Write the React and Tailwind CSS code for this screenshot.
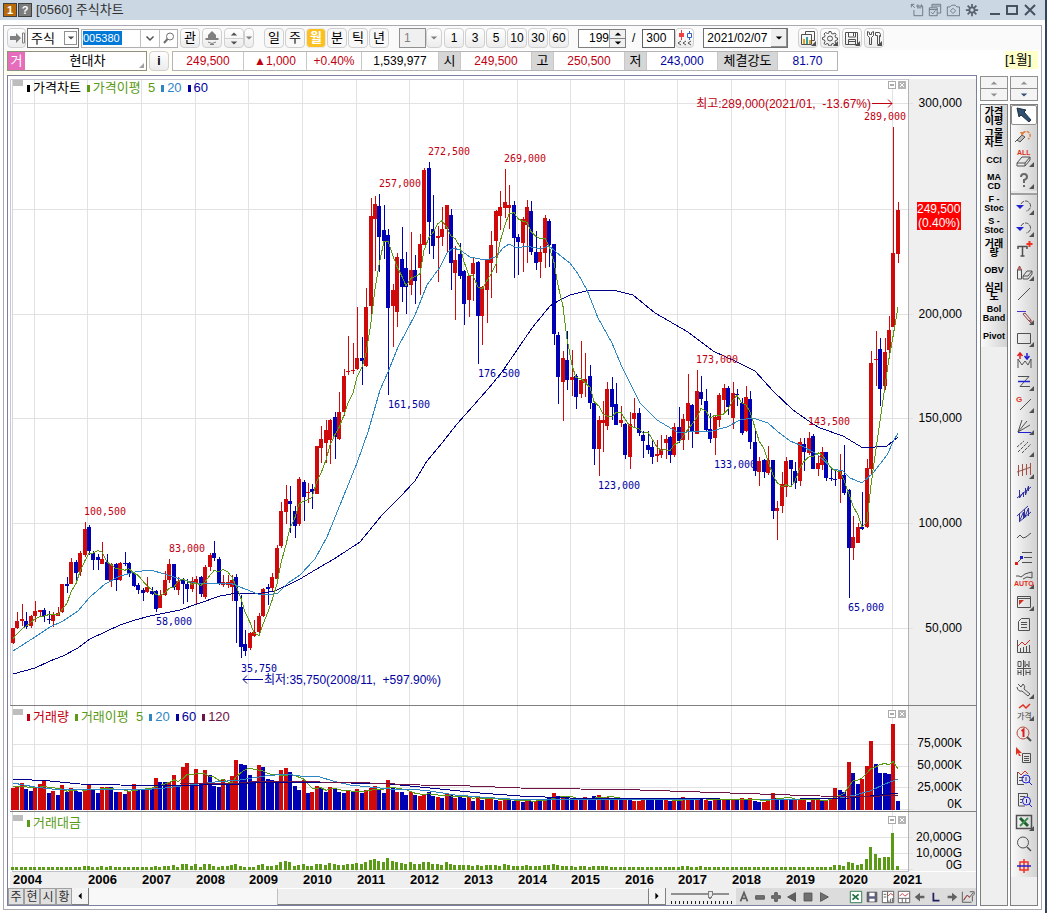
import React, { useState } from "react";

const RED = "#d00a0a";
const BLUE = "#0000b4";
const GREEN = "#5a9a14";
const SKY = "#2f86c4";
const NAVY = "#00008b";
const WINE = "#6e1446";

// -----------------------------
// CHART DATA
// -----------------------------
// one row per month: [up, body top, body bottom, high, low]
const CANDLES = [
  [1, 628, 643, 628, 644], [1, 621, 628, 612, 629], [1, 619, 621, 604, 626], [0, 621, 627, 612, 629], [1, 616, 626, 615, 628],
  [1, 611, 616, 601, 622], [1, 610, 612, 610, 617], [0, 610, 616, 608, 622], [0, 619, 620, 611, 624], [1, 614, 621, 612, 627],
  [1, 613, 616, 607, 616], [1, 584, 612, 584, 613], [0, 584, 586, 577, 593], [1, 562, 584, 558, 584], [0, 562, 573, 560, 583],
  [1, 553, 572, 551, 576], [1, 529, 555, 522, 557], [0, 527, 551, 525, 555], [0, 553, 560, 551, 570], [0, 557, 560, 554, 570],
  [1, 559, 564, 542, 564], [0, 562, 580, 554, 580], [1, 564, 581, 563, 587], [0, 564, 580, 563, 591], [1, 563, 580, 562, 581],
  [0, 563, 564, 552, 566], [0, 563, 573, 562, 577], [0, 573, 586, 572, 587], [0, 585, 590, 583, 594], [0, 590, 593, 588, 601],
  [1, 587, 592, 577, 593], [0, 591, 594, 587, 595], [0, 591, 609, 590, 612], [1, 595, 608, 590, 608], [1, 580, 595, 571, 596],
  [1, 564, 580, 559, 583], [0, 564, 587, 564, 590], [1, 581, 590, 577, 595], [0, 579, 584, 578, 604], [0, 584, 589, 579, 602],
  [1, 581, 589, 577, 592], [1, 579, 583, 576, 604], [0, 577, 594, 576, 597], [1, 567, 597, 565, 599], [1, 555, 567, 553, 571],
  [0, 553, 558, 541, 561], [0, 559, 584, 557, 585], [1, 582, 585, 575, 587], [1, 582, 585, 575, 588], [1, 580, 587, 575, 601],
  [0, 577, 601, 574, 643], [0, 607, 647, 595, 658], [0, 644, 651, 630, 656], [1, 633, 648, 632, 650], [1, 632, 636, 620, 637],
  [1, 616, 632, 613, 636], [1, 589, 616, 588, 617], [0, 587, 589, 584, 605], [1, 577, 588, 573, 591], [1, 548, 579, 545, 580],
  [1, 511, 546, 502, 548], [1, 499, 512, 485, 524], [0, 501, 504, 486, 533], [0, 511, 526, 506, 538], [1, 479, 524, 477, 526],
  [0, 482, 497, 480, 521], [1, 492, 493, 483, 503], [0, 489, 492, 484, 509], [1, 446, 494, 446, 494], [1, 439, 448, 426, 463],
  [1, 430, 443, 420, 463], [1, 420, 440, 419, 464], [0, 417, 437, 412, 459], [1, 412, 439, 392, 440], [1, 376, 412, 369, 416],
  [1, 371, 372, 336, 375], [1, 370, 371, 343, 374], [1, 358, 369, 307, 370], [0, 358, 361, 337, 385], [1, 307, 366, 288, 367],
  [1, 216, 306, 198, 319], [1, 204, 219, 196, 271], [0, 206, 237, 194, 272], [0, 230, 241, 205, 259], [0, 235, 308, 229, 395],
  [1, 290, 306, 284, 347], [1, 257, 312, 253, 327], [0, 259, 287, 227, 302], [0, 268, 287, 252, 314], [1, 270, 285, 232, 295],
  [0, 270, 281, 255, 304], [1, 244, 268, 234, 295], [1, 170, 245, 168, 245], [0, 168, 222, 162, 254], [0, 229, 246, 195, 259],
  [1, 236, 238, 226, 282], [1, 229, 237, 207, 246], [1, 205, 229, 205, 253], [0, 215, 263, 209, 290], [1, 260, 273, 246, 320],
  [0, 254, 276, 243, 279], [0, 271, 304, 270, 325], [1, 276, 300, 275, 317], [1, 263, 274, 258, 301], [0, 262, 316, 261, 364],
  [1, 287, 316, 286, 345], [1, 260, 290, 259, 323], [1, 245, 263, 231, 298], [1, 211, 241, 210, 273], [1, 207, 216, 191, 230],
  [1, 202, 208, 169, 218], [1, 205, 208, 185, 229], [0, 205, 238, 201, 278], [0, 237, 242, 234, 275], [1, 219, 243, 217, 272],
  [1, 207, 225, 200, 263], [0, 211, 252, 201, 255], [0, 252, 263, 231, 270], [1, 252, 262, 246, 278], [1, 218, 253, 215, 268],
  [0, 221, 245, 219, 267], [0, 244, 334, 244, 345], [0, 335, 377, 332, 404], [1, 358, 382, 351, 421], [0, 360, 380, 331, 390],
  [1, 377, 380, 350, 396], [0, 376, 397, 374, 409], [1, 380, 394, 341, 398], [1, 379, 383, 353, 397], [0, 376, 403, 365, 409],
  [0, 403, 449, 402, 465], [1, 420, 449, 416, 476], [1, 420, 423, 401, 452], [1, 389, 426, 382, 430], [0, 389, 407, 377, 420],
  [0, 404, 425, 383, 425], [1, 420, 423, 406, 427], [0, 424, 455, 423, 459], [1, 424, 457, 412, 469], [1, 413, 419, 398, 428],
  [0, 413, 433, 408, 436], [0, 435, 441, 431, 458], [0, 445, 450, 431, 454], [0, 447, 457, 440, 464], [1, 454, 456, 440, 462],
  [1, 449, 455, 435, 458], [1, 439, 443, 435, 459], [0, 437, 455, 436, 463], [1, 427, 455, 423, 457], [0, 427, 441, 407, 443],
  [1, 419, 440, 414, 450], [1, 403, 421, 374, 440], [0, 405, 431, 404, 448], [1, 391, 434, 370, 434], [0, 392, 399, 376, 405],
  [0, 401, 430, 389, 431], [0, 429, 439, 413, 443], [1, 417, 438, 416, 455], [1, 395, 420, 393, 427], [1, 388, 400, 384, 413],
  [0, 388, 407, 386, 415], [1, 393, 418, 382, 429], [0, 394, 395, 389, 406], [0, 403, 433, 398, 435], [1, 397, 431, 386, 432],
  [0, 399, 442, 391, 449], [0, 442, 471, 431, 476], [1, 461, 472, 457, 486], [0, 460, 472, 459, 478], [1, 460, 473, 446, 475],
  [0, 460, 511, 460, 519], [1, 508, 511, 501, 540], [1, 484, 506, 472, 513], [1, 461, 487, 457, 497], [0, 460, 469, 460, 485],
  [0, 471, 483, 462, 489], [1, 442, 481, 438, 486], [0, 444, 452, 438, 471], [1, 438, 453, 432, 455], [0, 436, 469, 434, 469],
  [1, 463, 469, 455, 476], [1, 452, 465, 447, 470], [0, 452, 478, 452, 481], [0, 478, 479, 468, 481], [0, 479, 480, 471, 486],
  [1, 471, 479, 454, 503], [0, 475, 493, 445, 495], [0, 490, 548, 489, 598], [1, 537, 548, 516, 560], [1, 527, 543, 523, 543],
  [0, 527, 529, 492, 530], [1, 468, 527, 459, 528], [1, 363, 469, 351, 474], [1, 359, 360, 331, 386], [0, 349, 389, 338, 406],
  [1, 352, 386, 338, 390], [1, 330, 350, 316, 355], [1, 253, 327, 127, 327], [1, 210, 254, 202, 263],
];

// bar heights; a negative one is a month with less volume than the one before
const VOLUME = [
  22, 23, 27, -21, -19, 22, 26, 29, -17, 19, -15, 25, -18, 22, -19, -18, 20, 26, -21, -17,
  23, 23, -23, -18, 18, -16, 19, 26, -21, -21, 20, -22, 32, -28, -28, 28, 35, -24, 43, 47,
  -26, 41, -26, 40, -35, -24, -23, 31, -26, 34, 50, -46, -45, -35, -28, 45, -43, -31, -30, -28,
  40, 42, -38, -24, -20, 30, -17, 18, 24, -22, -18, 23, -21, -18, -17, 19, -18, 21, -17, 20,
  22, 24, -21, -17, 30, -22, 18, -18, -15, 18, -15, 14, 16, -18, -14, 13, -12, 16, -15, 12,
  -13, -12, 13, -9, 14, -10, 11, 12, -10, 9, 12, -10, -9, 9, -8, 10, -9, 9, -10, 11,
  -12, 17, -14, 12, -12, -12, 10, -12, 13, -10, -14, 15, -13, 13, -11, 12, -10, 11, -12, 9,
  9, 12, -11, -11, -11, -10, 10, -9, 9, -9, 13, 12, -11, 10, -12, 10, -9, 11, -11, 10,
  -11, 10, -10, 12, -10, 12, -9, -8, 8, 11, 17, -12, -11, 10, -11, 11, 11, 11, -8, 10,
  11, -9, 10, 12, 22, -20, -18, 48, -37, -26, 31, 44, 69, -46, -37, -37, -36, 86, -9,
];

const MA20 = "13,651 35,637 50,627 63,621 78,611 90,597 105,584 120,576 135,572 150,570 165,574 180,579 195,583 210,584 230,583 245,589 258,594 268,595 278,593 288,583 300,575 315,559 327,537 342,500 357,463 368,432 380,390 388,372 398,347 415,315 427,285 440,267 447,253 453,248 460,250 470,257 480,259 490,259 497,256 503,248 509,244 517,248 527,246 540,249 549,246 562,257 570,263 578,274 587,290 598,318 612,343 622,367 640,403 657,420 677,432 687,432 712,431 727,427 740,420 753,418 768,423 777,431 790,441 800,445 817,454 833,469 843,471 850,478 862,483 873,473 887,455 893,442 898,433";
const MA60 = "13,674 35,668 50,661 63,656 78,648 90,639 105,632 120,625 135,620 150,616 165,613 180,610 200,603 220,596 237,593 262,593 275,591 290,584 300,579 315,570 334,559 360,542 382,515 400,497 415,481 427,461 442,443 457,424 473,406 488,389 502,372 517,350 532,328 550,306 560,300 570,295 590,290 613,290 633,295 655,313 688,332 713,351 737,362 755,371 773,391 793,410 813,424 820,428 843,436 863,448 887,446 898,437";

const VMA20 = "13,783 35,787 60,790 90,789 140,790 165,788 190,785 215,782 240,780 265,776 285,774 300,776 320,777 333,781 350,785 370,787 390,789 410,789 430,791 455,795 480,797 510,799 560,799 600,799 640,799 700,800 760,800 800,799 840,798 855,795 870,791 885,784 898,779";
const VMA60 = "13,779 50,781 80,784 120,785 160,786 200,785 240,784 270,782 320,782 350,783 390,784 420,787 450,790 480,793 520,796 570,798 640,798 720,799 800,799 850,798 880,795 898,793";
const VMA120 = "180,784 240,783 260,781 320,782 370,783 420,785 470,786 520,788 580,789 640,790 700,792 760,794 820,796 855,797 880,796 898,795";

const YEARS = Array.from({ length: 17 }, (_, k) => 2005 + k);
const STEP = 4.4695;
const xAt = (i) => Math.round(13 + i * STEP);
const yearX = (k) => Math.round(11.5 + (5 + 12 * k) * STEP) + 0.5;

const closeY = (c) => (c[0] ? c[1] : c[2]);

const average = (values, before, size) => {
  const all = [...before, ...values];
  return values
    .map((_, i) => {
      const part = all.slice(i, i + size);
      return xAt(i) + "," + (part.reduce((a, b) => a + b, 0) / size).toFixed(1);
    })
    .join(" ");
};

const MA5 = average(CANDLES.map(closeY), [645, 644, 640, 636], 5);
const VMA5 = average(VOLUME.map((v) => 810 - Math.abs(v)), [785, 786, 787, 787], 5);

const PEAKS = [
  [84, 515, "100,500", 1], [169, 552, "83,000", 1], [379, 187, "257,000", 1], [428, 155, "272,500", 1],
  [504, 162, "269,000", 1], [696, 363, "173,000", 1], [808, 425, "143,500", 1], [864, 120, "289,000", 1],
  [156, 625, "58,000", 0], [241, 672, "35,750", 0], [388, 408, "161,500", 0], [478, 377, "176,500", 0],
  [598, 489, "123,000", 0], [714, 468, "133,000", 0], [848, 611, "65,000", 0],
];

// -----------------------------
// CHART PANES
// -----------------------------
const AXIS = "font-['Liberation_Sans','Noto_Sans_CJK_KR',sans-serif] text-[12px]";

function Grid({ top, bottom, rows }) {
  return (
    <g shapeRendering="crispEdges">
      <rect x="909" y={top} width="67" height={bottom - top} fill="#efefef" />
      {YEARS.map((year, k) => (
        <line key={year} x1={yearX(k)} x2={yearX(k)} y1={top} y2={bottom} stroke="#e2e2e6" />
      ))}
      {rows.map((y) => (
        <line key={y} x1="12" x2="913" y1={y + 0.5} y2={y + 0.5} stroke="#e2e2e2" />
      ))}
      <line x1="12.5" x2="12.5" y1={top} y2={bottom} stroke="#d4d4dc" />
      <line x1="908.5" x2="908.5" y1={top} y2={bottom} stroke="#b4b4b4" />
    </g>
  );
}

function PaneHead({ items }) {
  return (
    <>
      <div className="absolute left-[5px] top-1 flex items-start">
        <span className="h-[6px] w-[10px] bg-[#bdbdbd]" />
        <div className="ml-1 flex gap-[6px] text-[13px] leading-[16px]">
          {items.map(([label, tone, mark]) => (
            <span key={label} className={"flex items-center gap-[3px] whitespace-pre " + tone}>
              <i className={"h-[7px] w-[3px] " + mark} />
              {label}
            </span>
          ))}
        </div>
      </div>
      <div className="absolute right-[70px] top-[5px] flex gap-[2px]">
        <button aria-label="최대화" className="flex h-[8px] w-[8px] items-center justify-center border border-[#aaa] bg-white">
          <i className="h-[2px] w-[4px] bg-[#aaa]" />
        </button>
        <button aria-label="닫기" className="h-[8px] w-[8px] bg-[#b4b4b4]">
          <svg viewBox="0 0 8 8" className="block h-full w-full" stroke="#fff">
            <path d="M2 2l4 4M6 2l-4 4" />
          </svg>
        </button>
      </div>
    </>
  );
}

function PricePane() {
  return (
    <section className="relative">
      <svg viewBox="8 76 968 629" className="block h-auto w-full">
        <rect x="8" y="76" width="968" height="629" fill="#fff" />
        <Grid top={79} bottom={705} rows={[103, 209, 314, 418, 523, 628]} />
        <path d="M10.5 705V79.5H908" fill="none" stroke="#c8c8d4" />
        <g shapeRendering="crispEdges">
          {CANDLES.map(([up, top, bottom, high, low], i) => (
            <g key={i} fill={up ? RED : BLUE}>
              <rect x={xAt(i)} y={high} width="1" height={low - high} />
              <rect x={xAt(i) - 2} y={top} width="4" height={Math.max(1, bottom - top)} />
            </g>
          ))}
        </g>
        <g fill="none" strokeWidth="1" shapeRendering="crispEdges">
          <polyline points={MA60} stroke={NAVY} />
          <polyline points={MA20} stroke={SKY} />
          <polyline points={MA5} stroke={GREEN} />
        </g>
        <g className="font-['DejaVu_Sans_Mono',monospace] text-[10px]">
          {PEAKS.map(([x, y, label, up]) => (
            <text key={label} x={x} y={y} fill={up ? "#c00010" : "#0000a0"}>
              {label}
            </text>
          ))}
        </g>
        <g className={AXIS}>
          <text x="871" y="108" textAnchor="end" fill="#c00010">최고:289,000(2021/01,&nbsp; -13.67%)</text>
          <text x="264" y="684" fill="#0000a0">최저:35,750(2008/11,&nbsp; +597.90%)</text>
          <path d="M872 103.5h20m-4 -4l4 4l-4 4" fill="none" stroke="#c00010" />
          <path d="M263 679.5h-20m4 -4l-4 4l4 4" fill="none" stroke="#0000a0" />
          {[["300,000", 107], ["200,000", 318], ["150,000", 422], ["100,000", 527], ["50,000", 632]].map(([label, y]) => (
            <text key={label} x="962" y={y} textAnchor="end">{label}</text>
          ))}
          <rect x="917" y="202" width="44" height="28" fill="#f00" />
          <text x="917" y="213" fill="#fff">249,500</text>
          <text x="918" y="227" fill="#fff">(0.40%)</text>
        </g>
      </svg>
      <PaneHead
        items={[
          ["가격차트", "text-black", "bg-black"],
          ["가격이평  5", "text-[#5a9a14]", "bg-[#5a9a14]"],
          ["20", "text-[#2f86c4]", "bg-[#2f86c4]"],
          ["60", "text-[#0000a0]", "bg-[#0000a0]"],
        ]}
      />
    </section>
  );
}

function VolumePane() {
  return (
    <section className="relative">
      <svg viewBox="8 705 968 106" className="block h-auto w-full">
        <rect x="8" y="705" width="968" height="106" fill="#fff" />
        <Grid top={705} bottom={811} rows={[744, 766, 787, 809]} />
        <path d="M10 705.5H976" stroke="#808080" />
        <g shapeRendering="crispEdges">
          {VOLUME.map((v, i) => (
            <rect key={i} x={xAt(i) - 2} y={810 - Math.abs(v)} width="4" height={Math.abs(v)} fill={v > 0 ? RED : BLUE} />
          ))}
        </g>
        <g fill="none" shapeRendering="crispEdges">
          <polyline points={VMA5} stroke={GREEN} />
          <polyline points={VMA20} stroke={SKY} />
          <polyline points={VMA60} stroke={NAVY} />
          <polyline points={VMA120} stroke={WINE} />
        </g>
        <g className={AXIS} textAnchor="end">
          <text x="962" y="747">75,000K</text>
          <text x="962" y="769">50,000K</text>
          <text x="962" y="791">25,000K</text>
          <text x="962" y="808">0K</text>
        </g>
      </svg>
      <PaneHead
        items={[
          ["거래량", "text-[#c00010]", "bg-[#c00010]"],
          ["거래이평  5", "text-[#5a9a14]", "bg-[#5a9a14]"],
          ["20", "text-[#2f86c4]", "bg-[#2f86c4]"],
          ["60", "text-[#0000a0]", "bg-[#0000a0]"],
          ["120", "text-[#6e1446]", "bg-[#6e1446]"],
        ]}
      />
    </section>
  );
}

function ValuePane() {
  // traded value follows volume times price
  const heights = VOLUME.map((v, i) => {
    const price = (732.6 - closeY(CANDLES[i])) / 2.097;
    return Math.max(3, Math.round(Math.abs(v) * price * 0.0019));
  });
  return (
    <section className="relative">
      <svg viewBox="8 811 968 77" className="block h-auto w-full">
        <rect x="8" y="811" width="968" height="77" fill="#fff" />
        <Grid top={811} bottom={871} rows={[837, 853, 869]} />
        <rect x="10" y="872" width="966" height="16" fill="#efefef" />
        <path d="M10 811.5H976" stroke="#808080" />
        <path d="M12 871.5H909" stroke="#c0c0c8" />
        <g shapeRendering="crispEdges" fill={GREEN}>
          {heights.map((h, i) => (
            <rect key={i} x={xAt(i) - 2} y={870 - h} width="3" height={h} />
          ))}
        </g>
        <g className={AXIS} textAnchor="end">
          <text x="962" y="841">20,000G</text>
          <text x="962" y="857">10,000G</text>
          <text x="962" y="869">0G</text>
        </g>
        <g className="font-['Liberation_Sans',sans-serif] text-[13px] font-bold">
          <text x="13" y="884">2004</text>
          {YEARS.slice(1).map((year, k) => (
            <text key={year} x={yearX(k + 1) + 0.5} y="884">{year}</text>
          ))}
        </g>
      </svg>
      <PaneHead items={[["거래대금", "text-[#5a9a14]", "bg-[#5a9a14]"]]} />
    </section>
  );
}

// -----------------------------
// SMALL PARTS
// -----------------------------
const BTN = "flex h-[20px] shrink-0 items-center justify-center rounded-[4px] border border-[#d0d0d0] bg-linear-to-b from-white to-[#ececec]";

function Icon({ children, size = "h-4 w-4", box = "0 0 16 16" }) {
  return (
    <svg viewBox={box} className={size + " block shrink-0"} fill="none" stroke="#505050">
      {children}
    </svg>
  );
}

function TitleBar() {
  return (
    <header className="flex h-[20px] items-center bg-[#cbd7e3] pl-[3px] pr-[9px] text-[13px]">
      <span className="flex h-[14px] w-[14px] items-center justify-center border border-[#404040] bg-[#b8690a] text-[11px] font-bold text-white">1</span>
      <span className="ml-px flex h-[14px] w-[14px] items-center justify-center border border-[#404040] bg-[#7c7c7c] text-[11px] font-bold text-white">?</span>
      <h1 className="ml-[4px] text-[#303030]">[0560] 주식차트</h1>
      <div className="ml-auto flex items-center">
        <button aria-label="화면 이동" className="mr-[4px]">
          <Icon size="h-[14px] w-[14px]"><path d="M7 3.500h7.500v11H4.500V8M8 5.500h5M1.500 5V1.500h3.500M1.500 1.500l4 4M9 1.500v3M13 1.500v3" stroke="#66717e" /></Icon>
        </button>
        <button aria-label="화면 복사" className="mr-[4px]">
          <Icon size="h-[14px] w-[14px]"><path d="M1.500 5.500h9v9h-9zM1.500 7.500h9M4.500 5V1.500h10v10H11M5 3.500h9M3.500 10.500l2 2l3 -4" stroke="#66717e" /></Icon>
        </button>
        <button aria-label="화면 캡처" className="mr-[5px]">
          <Icon size="h-[14px] w-[14px]"><path d="M1.500 4.500h3l2 -2h4l2 2h3v10h-14zM8 6l3 3l-3 3l-3 -3z" stroke="#66717e" /></Icon>
        </button>
        <button aria-label="설정" className="mr-[10px]">
          <Icon size="h-[14px] w-[14px]">
            <path d="M8 1v14M1 8h14M3 3l10 10M13 3l-10 10" stroke="#59636f" strokeWidth="2" />
            <circle cx="8" cy="8" r="3" fill="#cbd7e3" stroke="#59636f" strokeWidth="2" />
          </Icon>
        </button>
        <button aria-label="최소화" className="mr-[5px]">
          <Icon size="h-[12px] w-[12px]" box="0 0 12 12"><path d="M1 10h10" stroke="#465260" strokeWidth="2" /></Icon>
        </button>
        <button aria-label="최대화" className="mr-[6px]">
          <Icon size="h-[12px] w-[12px]" box="0 0 12 12"><path d="M1 2h10v8H1z" stroke="#465260" strokeWidth="2" /></Icon>
        </button>
        <button aria-label="닫기">
          <Icon size="h-[12px] w-[12px]" box="0 0 12 12"><path d="M1 1l10 10M11 1L1 11" stroke="#465260" strokeWidth="2" /></Icon>
        </button>
      </div>
    </header>
  );
}

function Arrow({ dir = "down", fill = "#505050" }) {
  const paths = { down: "M1 3h8L5 7z", up: "M1 7h8L5 3z", left: "M7 1v8L3 5z", right: "M3 1v8l4-4z" };
  return (
    <svg viewBox="0 0 10 10" className="block h-[8px] w-[8px] shrink-0">
      <path d={paths[dir]} fill={fill} />
    </svg>
  );
}

function Corner() {
  return <path d="M16 11v5h-5z" fill="#505050" stroke="none" />;
}

function Toolbar() {
  const [period, setPeriod] = useState("월");

  return (
    <div className="flex h-[24px] items-center bg-[#fafafa] pl-[3px] text-[12px]">
      <button className={BTN + " w-[19px]"} aria-label="펼치기">
        <Icon><path d="M1 6h6V3l5 5l-5 5v-3H1z" fill="#808080" stroke="none" /><path d="M13.500 3v10h2V3z" stroke="#808080" /></Icon>
      </button>
      <div className="relative ml-px h-[20px] w-[52px] shrink-0 border border-[#707070] bg-white">
        <select aria-label="구분" className="h-full w-full appearance-none pl-[3px] text-[13px] leading-[17px]">
          <option>주식</option>
        </select>
        <span className="pointer-events-none absolute right-px top-[2px] flex h-[14px] w-[13px] items-center justify-center border border-[#909090] bg-white">
          <Arrow />
        </span>
      </div>
      <div className="ml-[2px] flex h-[19px] shrink-0 items-center border border-[#b0b0b0] bg-white">
        <input aria-label="종목코드" defaultValue="005380" className="ml-px mr-[18px] h-[14px] w-[39px] bg-[#0078d7] text-[11px] text-white" />
        <button aria-label="종목 목록" className="flex h-full w-[19px] items-center justify-center border-l border-[#c0c0c0]">
          <Icon size="h-[10px] w-[10px]" box="0 0 10 10"><path d="M1.500 3.500L5 7l3.500 -3.500" strokeWidth="1.500" /></Icon>
        </button>
        <button aria-label="종목 검색" className="flex h-full w-[18px] items-center justify-center border-l border-[#c0c0c0]">
          <Icon size="h-[12px] w-[12px]" box="0 0 12 12"><circle cx="7" cy="4.500" r="3.500" stroke="#707070" /><path d="M4.500 7L1 11" stroke="#707070" strokeWidth="2" /></Icon>
        </button>
      </div>
      <button className={BTN + " ml-[2px] w-[20px] text-[13px]"}>관</button>
      <button className={BTN + " ml-[2px] w-[20px]"} aria-label="종목 연동">
        <Icon><path d="M8 1l4 4v3H4V5zM1.500 8h13v2h-13z" fill="#808080" stroke="none" /><path d="M4 12q4 3 8 0M6 14.500h4" stroke="#808080" /></Icon>
      </button>
      <button className={BTN + " ml-[2px] w-[20px] flex-col"} aria-label="이전 다음 종목">
        <Arrow dir="up" />
        <i className="h-px w-full shrink-0 bg-[#d0d0d0]" />
        <Arrow />
      </button>
      <button className={BTN + " w-[10px]"} aria-label="더보기"><Arrow fill="#808080" /></button>

      <div className="ml-[10px] flex gap-px text-[13px]">
        {["일", "주", "월", "분", "틱", "년"].map((p) => (
          <button
            key={p}
            onClick={() => setPeriod(p)}
            className={
              "flex h-[20px] w-[20px] items-center justify-center rounded-[4px] border " +
              (p === period ? "border-[#e8e8e8] bg-[#fdc01e] font-bold text-white" : "border-[#d0d0d0] bg-[#f8f8f8]")
            }
          >
            {p}
          </button>
        ))}
      </div>

      <input aria-label="주기" defaultValue="1" className="ml-[10px] h-[20px] w-[27px] shrink-0 border border-[#909090] bg-[#f0f0f0] pl-[4px] text-[#808080]" />
      <button className={BTN + " w-[16px]"} aria-label="주기 목록"><Arrow fill="#808080" /></button>
      <div className="ml-[2px] flex gap-px">
        {["1", "3", "5", "10", "30", "60"].map((n) => (
          <button key={n} className={BTN + " w-[20px]"}>{n}</button>
        ))}
      </div>

      <div className="ml-[9px] flex h-[19px] shrink-0 border border-[#808080]">
        <input aria-label="표시 봉수" defaultValue="199" className="w-[30px] bg-white text-right" />
        <div className="flex w-[16px] flex-col border-l border-[#a0a0a0] bg-[#f0f0f0]">
          <button aria-label="증가" className="flex h-[9px] items-center justify-center border-b border-[#808080]"><Arrow dir="up" fill="#000" /></button>
          <button aria-label="감소" className="flex h-[8px] items-center justify-center"><Arrow fill="#000" /></button>
        </div>
      </div>
      <span className="mx-[6px]">/</span>
      <input aria-label="전체 봉수" defaultValue="300" className="ml-[1px] h-[19px] w-[33px] shrink-0 border border-[#606060] bg-white pl-[3px]" />
      <button className={BTN + " w-[19px]"} aria-label="과거 데이터">
        <Icon>
          <path d="M4.500 0v10" stroke="#e04040" />
          <path d="M2 3h5v4H2z" fill="#f04040" stroke="none" />
          <path d="M12.500 1v9" stroke="#3060c0" />
          <path d="M10.500 3.500h4v4h-4z" fill="#fff" stroke="#3060c0" />
          <path d="M4 11l-3 2l3 2M9 11l-3 2l3 2M14 11l-3 2l3 2" />
        </Icon>
      </button>

      <div className="relative ml-[9px] h-[20px] w-[85px] shrink-0 border border-[#707070] bg-white">
        <select aria-label="기준일" className="h-full w-full appearance-none pl-[3px] leading-[17px]">
          <option>2021/02/07</option>
        </select>
        <span className="pointer-events-none absolute right-0 top-0 flex h-full w-[16px] items-center justify-center border-b border-r border-[#909090] bg-[#f0f0f0]">
          <Arrow fill="#000" />
        </span>
      </div>

      <div className="ml-[10px] flex gap-[2px]">
        <button className={BTN + " w-[20px]"} aria-label="차트 목록">
          <Icon>
            <path d="M5.500 4V1.500h9v9H12M1.500 4.500h10v10h-10z" />
            <path d="M3 9h2v5H3z" fill="#e0a020" stroke="none" />
            <path d="M6 7h2v7H6z" fill="#30a0a0" stroke="none" />
            <path d="M9 10h2v4H9z" fill="#e0a020" stroke="none" />
            <Corner />
          </Icon>
        </button>
        <button className={BTN + " w-[20px]"} aria-label="환경설정">
          <Icon>
            <path d="M7 1.500h2l.5 2l1.500 .5l2 -1l1 1.500l-1 1.500l.5 1.500l2 .5v2l-2 .5l-.5 1.500l1 1.500l-1.500 1l-1.500 -1l-1.500 .5l-.5 2h-2l-.5 -2l-1.500 -.5l-1.500 1l-1.500 -1l1 -2l-.5 -1.500l-2 -.5v-2l2 -.5l.5 -1.500l-1 -1.500l1.500 -1.500l2 1l1.500 -.5z" />
            <circle cx="8" cy="8.500" r="2.500" />
            <Corner />
          </Icon>
        </button>
        <button className={BTN + " w-[20px]"} aria-label="저장">
          <Icon><path d="M1.500 2.500h12v12h-12zM4.500 3v4h7V3M9.500 3v3M4.500 14V9.500h7V14M5 11.500h6" /><Corner /></Icon>
        </button>
        <button className={BTN + " w-[20px]"} aria-label="도구">
          <Icon><path d="M1.500 1.500v4l2 2v7h2v-7l2 -2v-4l-2 1v2h-2v-2zM9.500 2.500h4l1 2v2l-1 -1v9h-2v-9h-2z" /><Corner /></Icon>
        </button>
      </div>
    </div>
  );
}

function QuoteRow() {
  const cells = [
    ["249,500", "w-[71px] text-[#c00010]"],
    ["▲1,000", "w-[63px] text-[#c00010]"],
    ["+0.40%", "w-[55px] text-[#c00010]"],
    ["1,539,977", "w-[77px]"],
    ["시", "w-[22px] bg-[#d6d6d6] text-[13px]"],
    ["249,500", "w-[71px] text-[#c00010]"],
    ["고", "w-[22px] bg-[#d6d6d6] text-[13px]"],
    ["250,500", "w-[71px] text-[#c00010]"],
    ["저", "w-[22px] bg-[#d6d6d6] text-[13px]"],
    ["243,000", "w-[71px] text-[#0000a0]"],
    ["체결강도", "w-[60px] bg-[#d6d6d6] text-[13px]"],
    ["81.70", "w-[59px] text-[#0000a0]"],
  ];

  return (
    <div className="flex h-[25px] items-start bg-linear-to-r from-[#fffff0] via-white to-white px-[3px] pt-px text-[12px]">
      <div className="flex h-[20px] w-[140px] shrink-0 border border-[#909080] bg-white">
        <span className="flex w-[17px] items-center justify-center bg-[#e66cbc] text-[13px] text-white">거</span>
        <input aria-label="종목명" defaultValue="현대차" className="w-[105px] pl-[20px] text-center text-[13px]" />
        <svg viewBox="0 0 16 18" className="h-[18px] w-[16px]"><path d="M14 11v5H9z" fill="#a0a0a0" /></svg>
      </div>
      <button className={BTN + " ml-[2px] w-[20px] font-bold"}>i</button>
      <div className="ml-[3px] flex h-[20px] border border-[#b4b4b4] bg-white">
        {cells.map(([label, style], i) => (
          <span key={i} className={"flex items-center justify-center border-r border-[#c8c8c8] last:border-r-0 " + style}>
            {label}
          </span>
        ))}
      </div>
      <span className="ml-auto w-[33px] bg-[#ffffc8] text-[13px] leading-[18px]">[1월]</span>
    </div>
  );
}

// -----------------------------
// RIGHT COLUMNS
// -----------------------------
const INDICATORS = [
  ["가격", "이평"], ["그물", "차트"], ["CCI"], ["MA", "CD"], ["F -", "Stoc"], ["S -", "Stoc"],
  ["거래", "량"], ["OBV"], ["심리", "도"], ["Bol", "Band"], ["Pivot"],
];

const TRI = <path d="M20 14v5h-5z" fill="#505050" stroke="none" />;

const TOOLS = [
  ["선택", <path d="M3 3l9 2l-2 2l7 8l-2 2l-8 -7l-2 2z" fill="#305070" stroke="#203040" />],
  ["지우기 취소", <><path d="M3 14l5 -5l3 2l-5 5zM3 14l-2 2" fill="#bbb" /><path d="M9 7a4 4 0 1 1 5 6" stroke="#e08040" strokeWidth="1.500" strokeDasharray="3 1" /><path d="M6 6h5l-3 4z" fill="#e08040" stroke="none" /></>],
  ["전체 지우기", <><path d="M3 15l5 -6h8l-5 6zM3 15v3h8l5 -6v-3M11 15v3" />{TRI}<text x="3" y="7" className="text-[7px] font-bold" fill="#e03020" stroke="none">ALL</text></>],
  ["도움말", <><path d="M7 7q0 -3 3 -3t3 3q0 2 -3 3v3M10 15v2" strokeWidth="2" stroke="#686868" />{TRI}</>],
  ["되돌리기", <><path d="M7 8a5 5 0 1 1 5 7" strokeDasharray="4 1" /><path d="M2 9h8l-4 4z" fill="#2020d0" stroke="none" />{TRI}</>],
  ["다시하기", <><path d="M7 8a5 5 0 1 1 5 7" strokeDasharray="4 1" /><path d="M2 9h8l-4 4z" fill="#2020d0" stroke="none" />{TRI}</>],
  ["글자", <><path d="M4 9V6.500h9V9M8.500 6v10M6.500 16h4" strokeWidth="1.500" /><path d="M15.500 1v6M12.500 4h6" stroke="#f03020" strokeWidth="2" /></>],
  ["지우개", <><path d="M3.500 8h4v9h-4zM3.500 8l2 -4l2 4M9 14l4 -5h5l-4 5zM9 14v3h5l4 -5V9" /><path d="M4 5h3v3H4z" fill="#c06060" stroke="none" />{TRI}</>],
  ["추세선", <path d="M4 16L16 4" />],
  ["수평선", <><path d="M3 5.500h9" stroke="#5030d0" /><path d="M9 8l6 7l2 -1l-6 -7zM15 15l2 2v-3" stroke="#904040" />{TRI}</>],
  ["사각형", <><path d="M3.500 5.500h13v10h-13z" />{TRI}</>],
  ["고저", <><path d="M4 18V9l4 6l3 -4l3 4l3 -6v9" /><path d="M6 9V3M3.500 6L6 3l2.500 3" stroke="#e02020" strokeWidth="1.500" /><path d="M13 3v6M10.500 6L13 9l2.500 -3" stroke="#2020d0" strokeWidth="1.500" /></>],
  ["피보나치", <><path d="M4 4.500h11L6 14.500h10" /><path d="M4 9.500h12" stroke="#2020d0" strokeWidth="1.500" />{TRI}</>],
  ["갠", <><path d="M6 16L17 5" />{TRI}<text x="2" y="8" className="text-[8px] font-bold" fill="#e03020" stroke="none">G</text></>],
  ["팬", <><path d="M4 16L8 4M4 16L13 5M4 16L16 9" /><path d="M4 16.500h13" stroke="#2020d0" />{TRI}</>],
  ["평행선", <><path d="M3 9l7 -6M4 14L14 4M8 15l9 -9" strokeDasharray="3 1" />{TRI}</>],
  ["사이클", <><path d="M4.500 5v11M8.500 4v12M12.500 4v11M16.500 3v12M3 12l14 -5" stroke="#a05040" />{TRI}</>],
  ["회귀선", <path d="M3 16L17 5M5.500 8v8l4 -6v5M11.500 6v7l3 -9v5" stroke="#3030a0" />],
  ["회귀채널", <path d="M3 12L14 2M5 18L17 8M5.500 9v8l4 -9v7M10.500 5v9l4 -10v8" stroke="#3030a0" />],
  ["자유선", <path d="M3 12l3 -3l3 3l3 -1l5 -4" />],
  ["가격선", <><path d="M8 4.500h10M10 9.500h8M8 14.500h10M2 16l5 -5" /><path d="M6 8h3v3H6z" fill="#2020d0" stroke="none" /><path d="M1 14h3v3H1z" fill="#e02020" stroke="none" /></>],
  ["자동", <><path d="M2 6h3l2 1l4 -3l3 -1l4 -1v6l-5 -1l-4 2" />{TRI}<text x="0" y="16" className="text-[7px] font-bold" fill="#e03020" stroke="none">AUTO</text></>],
  ["창", <><path d="M3.500 4.500h13v11h-13zM3 6.500h13" /><path d="M5 8h5l-5 5z" fill="#d03020" stroke="none" />{TRI}</>],
  ["문서", <path d="M7.500 4.500h8v12h-11v-9zM7 8.500h6M7 10.500h6M7 13.500h6" />],
  ["차트", <><path d="M3.500 4v12.500H17M6.500 16v-4M9.500 16v-5M12.500 16v-6M15.500 16v-7" /><path d="M4 10l4 -4l3 3l5 -5" stroke="#d03020" /></>],
  ["일주월", <path d="M4 3.500h3v5H4zM11 3v6l2 -3l2 3V3M9.500 2v16M3 10.500h14M4 12v5M7 12v5M4 14.500h3M12 12v5M16 12v5M12 14.500h4" />],
  ["설정", <><path d="M4 4l3 3l2 -3q3 2 1 5l6 5l-2 2l-6 -5q-4 1 -5 -4" />{TRI}</>],
  ["가격표시", <><path d="M5 6l4 -3l3 3l4 -4" stroke="#e03020" strokeWidth="1.500" />{TRI}<text x="3" y="17" className="text-[8px]" fill="#404040" stroke="none">가격</text></>],
  ["한번 확대", <><circle cx="9" cy="9" r="6" stroke="#b05040" /><path d="M13 13l4 4" strokeWidth="2" /><path d="M7.500 7L9.500 5.500V13" stroke="#e02020" strokeWidth="2" /></>],
  ["정보 보기", <><path d="M2 1l6 6H5l2 3H5L4 7l-2 2z" fill="#e03020" stroke="none" /><path d="M8.500 7.500h8v9h-8zM10 10.500h5M10 12.500h5M10 14.500h5" /></>],
  ["차트 분석", <><path d="M3.500 4v12.500H10M5 9.500h5M5 12.500h4" /><path d="M4 4l3 3l4 -4l3 3" stroke="#d03020" /><circle cx="12" cy="11" r="4" stroke="#2020d0" /><path d="M15 14l3 3M12 9v4" stroke="#2020d0" /></>],
  ["문서 분석", <><path d="M4.500 3.500h9v4M4.500 3v13H11M6 6.500h5M6 9.500h3M6 12.500h2" /><circle cx="12.500" cy="11" r="4" stroke="#2020d0" /><path d="M15 14l3 3M12.500 9v4" stroke="#2020d0" /></>],
  ["엑셀", <><path d="M2.500 3.500h15v13h-15z" strokeWidth="1.500" /><path d="M6 6l8 8" stroke="#206030" strokeWidth="3" /><path d="M14 6l-8 8" stroke="#3c9050" strokeWidth="2" />{TRI}</>],
  ["돋보기", <><circle cx="9" cy="8.500" r="5.500" /><path d="M13 13l4 4" strokeWidth="1.500" /></>],
  ["십자선", <><path d="M6 6h8v8H6zM10 3v14" stroke="#f03020" strokeWidth="1.500" /><path d="M3 10h14" stroke="#2020d0" strokeWidth="1.500" /></>],
];

function ColumnHead({ lower = "#909090" }) {
  return (
    <div className="mb-[3px] mt-px flex h-[25px] shrink-0 flex-col border border-[#909090] bg-[#f4f4f4]">
      <button aria-label="위로" className="flex h-[12px] items-center justify-center border-b border-[#909090]"><Arrow dir="up" fill="#909090" /></button>
      <button aria-label="아래로" className="flex h-[11px] items-center justify-center"><Arrow fill={lower} /></button>
    </div>
  );
}

function IndicatorColumn() {
  return (
    <aside className="flex w-[28px] shrink-0 flex-col">
      <ColumnHead />
      <div className="flex-1 border border-[#808080] bg-[#efefef]">
        {INDICATORS.map((lines) => (
          <button
            key={lines.join("")}
            className={
              "flex h-[22px] w-full flex-col items-center justify-center whitespace-nowrap bg-linear-to-r from-[#fafafa] to-[#d2d2d2] font-bold leading-[9px] " +
              (/[A-Z]/.test(lines[0]) ? "text-[9px]" : "text-[10px]")
            }
          >
            {lines.map((t) => <span key={t}>{t}</span>)}
          </button>
        ))}
      </div>
    </aside>
  );
}

function ToolColumn() {
  return (
    <aside className="flex w-[28px] shrink-0 flex-col">
      <ColumnHead lower="#305078" />
      <div className="flex-1 border border-[#808080] bg-[#efefef]">
        {TOOLS.map(([name, art], i) => (
          <React.Fragment key={name}>
            {i === 4 && <div className="h-[4px] border-b-2 border-[#a0a0a0] bg-[#e8e8e8]" />}
            <button
              aria-label={name}
              className={
                "flex w-full items-center justify-center " +
                (i === 0 ? "h-[20px] rounded-[2px] border border-[#909090] bg-white" : "h-[22px] bg-linear-to-r from-[#fafafa] to-[#d2d2d2]")
              }
            >
              <svg viewBox="0 0 20 20" className="block h-5 w-5 shrink-0" fill="none" stroke="#505050">{art}</svg>
            </button>
          </React.Fragment>
        ))}
      </div>
    </aside>
  );
}

// -----------------------------
// BOTTOM BAR
// -----------------------------
const BOTTOM_TOOLS = [
  ["글자 크기", <path d="M4 13l4 -10l4 10M5.500 9.500h5" stroke="#606060" strokeWidth="2" />],
  ["축소", <path d="M3 6.500h10v4H3z" fill="#707070" />],
  ["확대", <path d="M6.500 3h3v3.500H13v3H9.500V13h-3V9.500H3v-3h3.500z" fill="#707070" />],
  ["뒤로", <path d="M12 3v10L3 8z" fill="#606060" />],
  ["정지", <path d="M3.500 3.500h9v9h-9z" fill="#707070" />],
  ["앞으로", <path d="M4 3v10l9 -5z" fill="#707070" />],
];

const BOTTOM_ICONS = [
  ["엑셀 저장", <><path d="M1.500 1.500h13v13h-13z" fill="#fff" stroke="#207040" /><path d="M4 5l7 6M11 5l-7 6" stroke="#207040" strokeWidth="2" /></>],
  ["저장", <><path d="M2.500 2.500h11v11h-11z" fill="#606080" /><path d="M5 3h6v4H5zM5 10h6v3H5z" fill="#fff" stroke="none" /></>],
  ["차트 보기", <><path d="M1.500 1.500h13v13h-13z" fill="#fff" /><path d="M7.500 2v12M3 5h3M3 8h3M9 12v2M11 10v4M13 9v5" /><path d="M8 7l3 -3l3 2" stroke="#c03030" /></>],
  ["분할 보기", <><path d="M1.500 1.500h13v13h-13zM2 9.500h12M6 10v4M10 10v4" fill="#fff" /><path d="M3 7l3 -3l3 3l4 -3" stroke="#c03030" /></>],
  ["이전", <path d="M2 8l6 -5v3.500h5v3H8V13z" fill="#606060" stroke="none" />],
  ["로그", <path d="M5 3v9h7" stroke="#202060" strokeWidth="2" />],
  ["다음", <path d="M14 8L8 3v3.500H3v3h5V13z" fill="#606060" stroke="none" />],
  ["차트 설정", <><path d="M1.500 2v12H12M3 12l4 -6l3 2l4 -5M10 2h5v3l-2 2v6" /><path d="M3 11l4 -5l3 3" stroke="#c03030" /></>],
];

function BottomBar() {
  return (
    <footer className="flex h-[17px] bg-[#f8f8f8] text-[12px]">
      {["주", "현", "시", "황"].map((t) => (
        <button key={t} className="w-[16px] shrink-0 border border-[#a0a0a0] bg-[#e0e0e0] leading-[14px] text-[#303030]">{t}</button>
      ))}
      <button aria-label="왼쪽" className="flex w-[17px] shrink-0 items-center justify-center border-b border-r border-[#808080] bg-[#f4f4f4]"><Arrow dir="left" fill="#000" /></button>
      <div className="flex flex-1 pl-[188px]">
        <div className="flex-1 border border-b-[#808080] border-l-[#c0c0c0] border-r-[#808080] border-t-white bg-[#efefef]" />
      </div>
      <button aria-label="오른쪽" className="flex w-[17px] shrink-0 items-center justify-center border-b border-r border-[#808080] bg-[#f4f4f4]"><Arrow dir="right" fill="#000" /></button>
      <div className="flex w-[70px] shrink-0 items-center justify-center bg-[#efefef]">
        <svg viewBox="0 0 62 16" className="h-4 w-[62px]" shapeRendering="crispEdges">
          <path d="M1 4.500h58" stroke="#909090" strokeWidth="2" />
          <path d="M38 2h4v5l-2 3l-2 -3z" fill="#e8e8e8" stroke="#808080" />
          <path d="M1 13h61" stroke="#202020" strokeWidth="3" strokeDasharray="1 3" />
        </svg>
      </div>
      <div className="flex shrink-0 bg-[#dcdcdc]">
        {BOTTOM_TOOLS.map(([name, art]) => (
          <button key={name} aria-label={name} className="flex w-4 items-center justify-center"><Icon size="h-[14px] w-[14px]">{art}</Icon></button>
        ))}
        <i className="w-[16px]" />
        {BOTTOM_ICONS.map(([name, art]) => (
          <button key={name} aria-label={name} className="flex w-4 items-center justify-center"><Icon size="h-[14px] w-[14px]">{art}</Icon></button>
        ))}
      </div>
    </footer>
  );
}

// -----------------------------
// UI
// -----------------------------
export default function App() {
  return (
    <div className="min-h-screen border-r-2 border-[#34445c] bg-white pb-[3px] font-['Liberation_Sans','Noto_Sans_CJK_KR',sans-serif] text-black">
      <TitleBar />
      <main className="mx-[3px] mt-[5px] border border-[#a8a8b0] pb-[3px]">
        <Toolbar />
        <QuoteRow />
        <div className="flex px-[3px]">
          <div className="mr-[3px] min-w-0 flex-1 border border-[#7c80a0]">
            <PricePane />
            <VolumePane />
            <ValuePane />
            <BottomBar />
          </div>
          <div className="flex gap-[2px]">
            <IndicatorColumn />
            <ToolColumn />
          </div>
        </div>
      </main>
    </div>
  );
}
